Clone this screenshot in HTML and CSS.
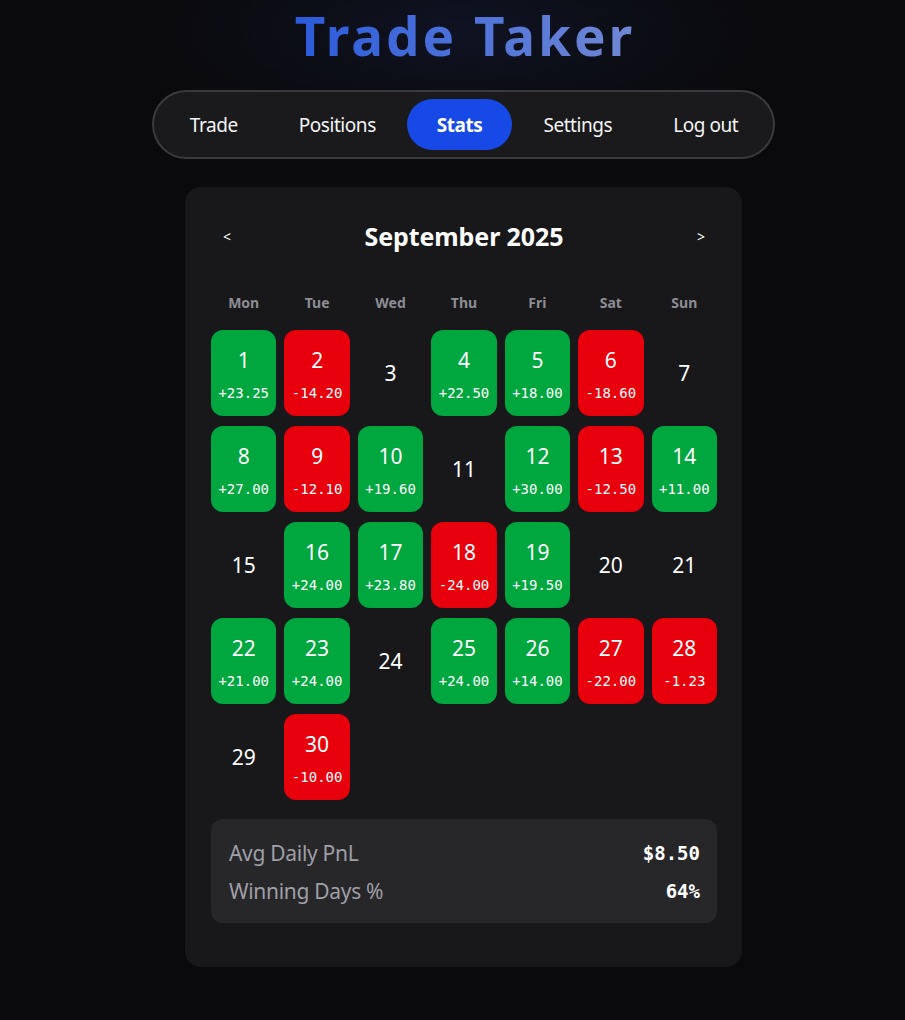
FILE: index.html
```html
<!DOCTYPE html>
<html lang="en">
<head>
<meta charset="utf-8">
<title>Trade Taker</title>
<link rel="stylesheet" href="styles.css">
</head>
<body>
<div class="app">
  <h1 class="brand">Trade Taker</h1>
  <nav class="nav">
    <a class="nav-item">Trade</a>
    <a class="nav-item">Positions</a>
    <a class="nav-item active">Stats</a>
    <a class="nav-item">Settings</a>
    <a class="nav-item">Log out</a>
  </nav>
  <main class="card">
    <div class="cal-head">
      <button class="arrow">&lt;</button>
      <h2 class="month">September 2025</h2>
      <button class="arrow">&gt;</button>
    </div>
    <div class="weekdays">
      <span>Mon</span><span>Tue</span><span>Wed</span><span>Thu</span><span>Fri</span><span>Sat</span><span>Sun</span>
    </div>
    <div class="grid">
      <div class="day win"><span class="num">1</span><span class="pnl">+23.25</span></div>
      <div class="day loss"><span class="num">2</span><span class="pnl">-14.20</span></div>
      <div class="day empty"><span class="num">3</span></div>
      <div class="day win"><span class="num">4</span><span class="pnl">+22.50</span></div>
      <div class="day win"><span class="num">5</span><span class="pnl">+18.00</span></div>
      <div class="day loss"><span class="num">6</span><span class="pnl">-18.60</span></div>
      <div class="day empty"><span class="num">7</span></div>

      <div class="day win"><span class="num">8</span><span class="pnl">+27.00</span></div>
      <div class="day loss"><span class="num">9</span><span class="pnl">-12.10</span></div>
      <div class="day win"><span class="num">10</span><span class="pnl">+19.60</span></div>
      <div class="day empty"><span class="num">11</span></div>
      <div class="day win"><span class="num">12</span><span class="pnl">+30.00</span></div>
      <div class="day loss"><span class="num">13</span><span class="pnl">-12.50</span></div>
      <div class="day win"><span class="num">14</span><span class="pnl">+11.00</span></div>

      <div class="day empty"><span class="num">15</span></div>
      <div class="day win"><span class="num">16</span><span class="pnl">+24.00</span></div>
      <div class="day win"><span class="num">17</span><span class="pnl">+23.80</span></div>
      <div class="day loss"><span class="num">18</span><span class="pnl">-24.00</span></div>
      <div class="day win"><span class="num">19</span><span class="pnl">+19.50</span></div>
      <div class="day empty"><span class="num">20</span></div>
      <div class="day empty"><span class="num">21</span></div>

      <div class="day win"><span class="num">22</span><span class="pnl">+21.00</span></div>
      <div class="day win"><span class="num">23</span><span class="pnl">+24.00</span></div>
      <div class="day empty"><span class="num">24</span></div>
      <div class="day win"><span class="num">25</span><span class="pnl">+24.00</span></div>
      <div class="day win"><span class="num">26</span><span class="pnl">+14.00</span></div>
      <div class="day loss"><span class="num">27</span><span class="pnl">-22.00</span></div>
      <div class="day loss"><span class="num">28</span><span class="pnl">-1.23</span></div>

      <div class="day empty"><span class="num">29</span></div>
      <div class="day loss"><span class="num">30</span><span class="pnl">-10.00</span></div>
    </div>
    <div class="stats">
      <div class="stat-row"><span class="stat-label">Avg Daily PnL</span><span class="stat-value">$8.50</span></div>
      <div class="stat-row"><span class="stat-label">Winning Days %</span><span class="stat-value">64%</span></div>
    </div>
  </main>
</div>
</body>
</html>
```

FILE: styles.css
```css
* { box-sizing: border-box; }

html, body { height: 100%; }

body {
  margin: 0;
  background: radial-gradient(ellipse 300px 110px at 462px 30px, #0f1322 0%, #0a0a0d 100%) #0a0a0c;
  background-color: #0a0a0c;
  color: #fff;
  font-family: "Noto Sans", "Open Sans", sans-serif;
}

.app {
  display: flex;
  flex-direction: column;
  align-items: center;
  padding-left: 22px;
}

.brand {
  margin: 0;
  padding: 0 0 0 3px;
  font-size: 53px;
  line-height: 72px;
  font-weight: 700;
  letter-spacing: 3px;
  background: linear-gradient(90deg, #2a5bdc 0%, #7088d4 100%);
  -webkit-background-clip: text;
  background-clip: text;
  color: transparent;
}

.nav {
  margin-top: 18px;
  display: flex;
  gap: 1px;
  padding: 7px 5px 7px 6px;
  border: 2px solid #3a3a3e;
  border-radius: 999px;
  background: #1a1a1d;
}

.nav-item {
  display: flex;
  align-items: center;
  height: 51px;
  padding: 0 30px;
  border-radius: 999px;
  font-size: 19px;
  color: #f4f4f5;
  letter-spacing: -0.45px;
}

.nav-item.active {
  background: #1749e6;
  font-weight: 700;
  color: #fff;
}

.card {
  margin-top: 28px;
  width: 557px;
  background: #18181b;
  border-radius: 16px;
  padding: 23px 25px 44px 26px;
}

.cal-head {
  display: flex;
  align-items: center;
  justify-content: space-between;
  height: 52px;
}

.arrow {
  background: none;
  border: none;
  color: #fff;
  font-family: "Noto Sans", sans-serif;
  font-size: 14px;
  padding: 8px 12px;
  cursor: pointer;
}

.month {
  margin: 0;
  font-size: 25px;
  font-weight: 700;
  letter-spacing: -0.1px;
}

.weekdays {
  margin-top: 30px;
  display: grid;
  grid-template-columns: repeat(7, 1fr);
  column-gap: 8px;
  height: 20px;
  align-items: center;
}

.weekdays span {
  text-align: center;
  font-size: 14px;
  font-weight: 700;
  color: #8d8d94;
}

.grid {
  margin-top: 18px;
  display: grid;
  grid-template-columns: repeat(7, 1fr);
  grid-auto-rows: 86px;
  column-gap: 8px;
  row-gap: 10px;
}

.day {
  border-radius: 12px;
  display: flex;
  flex-direction: column;
  align-items: center;
  color: #fff;
}

.day.win { background: #00a63e; }
.day.loss { background: #e7000b; }

.day.win .num, .day.loss .num {
  margin-top: 15px;
  font-size: 21px;
  line-height: 30px;
}

.day.empty {
  justify-content: center;
}

.day.empty .num {
  font-size: 21px;
  line-height: 30px;
}

.pnl {
  margin-top: 9px;
  font-family: "DejaVu Sans Mono", "Liberation Mono", monospace;
  font-size: 14px;
  line-height: 18px;
}

.stats {
  margin-top: 19px;
  background: #27272a;
  border-radius: 12px;
  padding: 20px 17px 18px 18px;
  display: flex;
  flex-direction: column;
  gap: 10px;
}

.stat-row {
  display: flex;
  justify-content: space-between;
  align-items: center;
  height: 28px;
}

.stat-label {
  font-size: 21px;
  color: #9f9fa7;
  letter-spacing: -0.3px;
}

.stat-value {
  font-family: "DejaVu Sans Mono", "Liberation Mono", monospace;
  font-weight: 700;
  font-size: 19px;
  color: #fff;
}
```
